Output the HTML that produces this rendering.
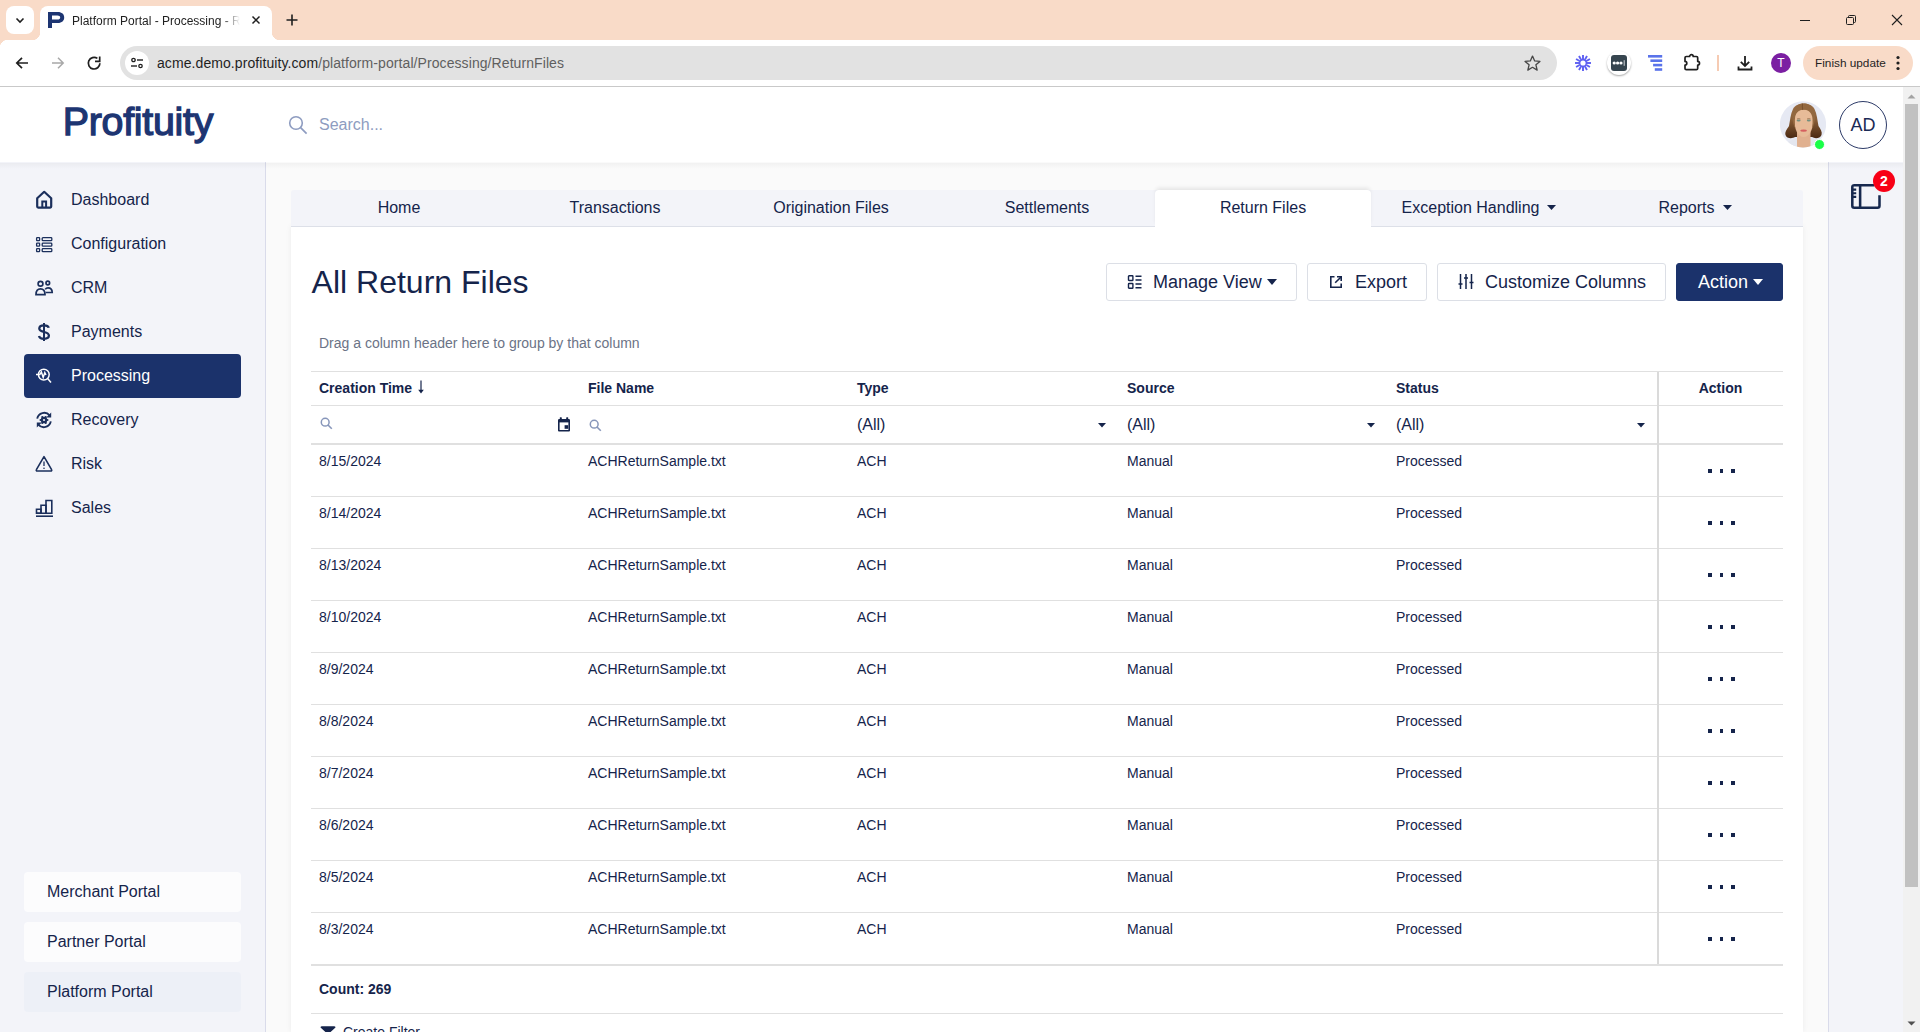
<!DOCTYPE html>
<html><head><meta charset="utf-8">
<style>
*{box-sizing:border-box;margin:0;padding:0}
html,body{width:1920px;height:1032px;overflow:hidden;background:#fff;font-family:"Liberation Sans",sans-serif;color:#1c2541}
.a{position:absolute}
svg{display:block}
/* chrome */
#tabstrip{left:0;top:0;width:1920px;height:40px;background:#f9dbc8}
#toolbar{left:0;top:40px;width:1920px;height:46px;background:#fff}
#tbline{left:0;top:86px;width:1920px;height:1px;background:#c9c9c9}
/* page */
#header{left:0;top:87px;width:1903px;height:76px;background:#fff}
#sidebar{left:0;top:162px;width:266px;height:870px;background:#f3f4f9;border-right:1px solid #d9dbea}
#main{left:266px;top:162px;width:1562px;height:870px;background:#fafafa}
#rpanel{left:1828px;top:162px;width:75px;height:870px;background:#f3f4f9;border-left:1px solid #d9dbea}
#scroll{left:1903px;top:87px;width:17px;height:945px;background:#f1f1f1}

.side{left:71px;margin-top:1px;font-size:16px;line-height:18px;color:#15244b;white-space:nowrap}
.portal{left:24px;width:217px;height:40px;border-radius:4px;background:#fcfcfd;padding-left:23px;font-size:16px;line-height:40px;color:#15244b}

.tab{top:199px;height:18px;text-align:center;font-size:16px;line-height:18px;color:#15244b;white-space:nowrap}
.btn{top:263px;height:38px;border:1px solid #dcdfe6;border-radius:3px;background:#fff}
.btxt{top:272px;font-size:18px;line-height:21px;color:#15244b;white-space:nowrap}

.hl{left:311px;width:1472px;height:1px;background:#e0e0e0}
.th{top:380px;font:bold 14px/16px 'Liberation Sans',sans-serif;color:#15244b;white-space:nowrap}
.flt{top:416px;font-size:16px;line-height:18px;color:#15244b}
.td{font-size:14px;line-height:16px;color:#15244b;white-space:nowrap}
.dots{left:1708px;width:27px;height:4px}
.dots i{position:absolute;top:0;width:3.5px;height:3.5px;background:#15244b}
</style></head><body>
<div id="tabstrip" class="a"></div>
<div id="toolbar" class="a"></div>
<div id="tbline" class="a"></div>
<!-- tab strip -->
<div class="a" style="left:6px;top:6px;width:28px;height:28px;border-radius:8px;background:#ffffff"></div>
<svg class="a" style="left:14px;top:14px" width="12" height="12" viewBox="0 0 12 12"><path d="M2.5 4.5 L6 8 L9.5 4.5" fill="none" stroke="#1f1f1f" stroke-width="1.6"/></svg>
<div class="a" style="left:40px;top:6px;width:232px;height:34px;background:#fff;border-radius:8px 8px 0 0"></div>
<div class="a" style="left:32px;top:32px;width:8px;height:8px;background:radial-gradient(circle at 0 0,#f9dbc8 8px,#fff 8.5px)"></div>
<div class="a" style="left:272px;top:32px;width:8px;height:8px;background:radial-gradient(circle at 100% 0,#f9dbc8 8px,#fff 8.5px)"></div>
<svg class="a" style="left:0;top:0" width="70" height="40" viewBox="0 0 70 40"><path fill-rule="evenodd" fill="#1d3572" d="M48 12.1 H57.8 C62 12.1 64.2 14.4 64.2 17.4 C64.2 20.5 62 22.9 57.8 22.9 H52 V27.9 H48 Z M52 15.4 V19.6 H57.4 C59.3 19.6 60.2 18.8 60.2 17.5 C60.2 16.2 59.3 15.4 57.4 15.4 Z"/></svg>
<div class="a" style="left:72px;top:14px;width:170px;overflow:hidden;white-space:nowrap;font-size:12px;line-height:14px;color:#1f1f1f;-webkit-mask-image:linear-gradient(90deg,#000 150px,transparent 168px)">Platform Portal - Processing - Return Files</div>
<svg class="a" style="left:250px;top:14px" width="12" height="12" viewBox="0 0 12 12"><path d="M2.5 2.5 L9.5 9.5 M9.5 2.5 L2.5 9.5" stroke="#1f1f1f" stroke-width="1.5"/></svg>
<svg class="a" style="left:285px;top:13px" width="14" height="14" viewBox="0 0 14 14"><path d="M7 1.5 V12.5 M1.5 7 H12.5" stroke="#1f1f1f" stroke-width="1.6"/></svg>
<svg class="a" style="left:1798px;top:14px" width="14" height="12" viewBox="0 0 14 12"><path d="M2 6.5 H12" stroke="#1f1f1f" stroke-width="1"/></svg>
<svg class="a" style="left:1844px;top:13px" width="14" height="14" viewBox="0 0 14 14"><rect x="2.5" y="4.5" width="7" height="7" rx="1" fill="none" stroke="#1f1f1f" stroke-width="1"/><path d="M4.5 4.5 V3.5 a1 1 0 0 1 1-1 H10.5 a1 1 0 0 1 1 1 V8.5 a1 1 0 0 1 -1 1 H9.5" fill="none" stroke="#1f1f1f" stroke-width="1"/></svg>
<svg class="a" style="left:1890px;top:13px" width="14" height="14" viewBox="0 0 14 14"><path d="M2 2 L12 12 M12 2 L2 12" stroke="#1f1f1f" stroke-width="1.1"/></svg>
<!-- toolbar -->
<div class="a" style="left:0;top:40px;width:8px;height:8px;background:radial-gradient(circle at 100% 100%,#fff 8px,#f9dbc8 8.5px)"></div>
<svg class="a" style="left:14px;top:55px" width="16" height="16" viewBox="0 0 16 16"><path d="M14 8 H3 M8 2.8 L2.8 8 L8 13.2" fill="none" stroke="#1f1f1f" stroke-width="1.7"/></svg>
<svg class="a" style="left:50px;top:55px" width="16" height="16" viewBox="0 0 16 16"><path d="M2 8 H13 M8 2.8 L13.2 8 L8 13.2" fill="none" stroke="#a8a8a8" stroke-width="1.5"/></svg>
<svg class="a" style="left:86px;top:55px" width="16" height="16" viewBox="0 0 16 16"><path d="M13.9 8.3 A5.8 5.8 0 1 1 11.4 3.4" fill="none" stroke="#1f1f1f" stroke-width="1.7"/><path d="M13.7 1.6 V6.3 H9" fill="none" stroke="#1f1f1f" stroke-width="1.7"/></svg>
<div class="a" style="left:120px;top:46px;width:1437px;height:34px;border-radius:17px;background:#e2e2e2"></div>
<div class="a" style="left:125px;top:51px;width:24px;height:24px;border-radius:12px;background:#fff"></div>
<svg class="a" style="left:129px;top:55px" width="16" height="16" viewBox="0 0 16 16"><circle cx="4.5" cy="5" r="1.7" fill="none" stroke="#1f1f1f" stroke-width="1.3"/><path d="M8 5 H14" stroke="#1f1f1f" stroke-width="1.4"/><circle cx="11.5" cy="11" r="1.7" fill="none" stroke="#1f1f1f" stroke-width="1.3"/><path d="M2 11 H8" stroke="#1f1f1f" stroke-width="1.4"/></svg>
<div class="a" style="left:157px;top:55px;font-size:14px;line-height:16px;letter-spacing:0.08px;white-space:nowrap;color:#1f1f1f" id="url">acme.demo.profituity.com<span style="color:#5f5f5f">/platform-portal/Processing/ReturnFiles</span></div>
<svg class="a" style="left:1523px;top:54px" width="19" height="19" viewBox="0 0 20 20"><path d="M10 2.2 L12.3 7.3 L17.8 7.8 L13.6 11.4 L14.9 16.9 L10 14 L5.1 16.9 L6.4 11.4 L2.2 7.8 L7.7 7.3 Z" fill="none" stroke="#474747" stroke-width="1.4" stroke-linejoin="round"/></svg>
<svg class="a" style="left:1574px;top:54px" width="18" height="18" viewBox="0 0 18 18"><g stroke="#5d5ff2" stroke-width="1.9"><path d="M9.00 12.90 L9.00 17.00"/><path d="M7.05 12.38 L5.00 15.93"/><path d="M5.62 10.95 L2.07 13.00"/><path d="M5.10 9.00 L1.00 9.00"/><path d="M5.62 7.05 L2.07 5.00"/><path d="M7.05 5.62 L5.00 2.07"/><path d="M9.00 5.10 L9.00 1.00"/><path d="M10.95 5.62 L13.00 2.07"/><path d="M12.38 7.05 L15.93 5.00"/><path d="M12.90 9.00 L17.00 9.00"/><path d="M12.38 10.95 L15.93 13.00"/><path d="M10.95 12.38 L13.00 15.93"/></g><circle cx="9" cy="9" r="3.4" fill="none" stroke="#5d5ff2" stroke-width="1.6"/></svg>
<div class="a" style="left:1607px;top:51px;width:24px;height:24px;border-radius:12px;background:#fff;box-shadow:0 1px 2px rgba(0,0,0,.35)"></div>
<div class="a" style="left:1611px;top:55px;width:16px;height:16px;border-radius:3px;background:#36454f"></div>
<svg class="a" style="left:1611px;top:55px" width="16" height="16" viewBox="0 0 16 16"><circle cx="3.2" cy="8" r="1.6" fill="#fff"/><circle cx="6.6" cy="8" r="1.6" fill="#fff"/><circle cx="10" cy="8" r="1.6" fill="#fff"/><path d="M13.2 5.2 V10.8" stroke="#d0d4d8" stroke-width="1"/></svg>
<svg class="a" style="left:1647px;top:55px" width="17" height="17" viewBox="0 0 17 17"><g fill="#5a73ea"><rect x="1" y="0" width="14.2" height="2.6"/><rect x="3.4" y="4.4" width="11.8" height="2.6"/><rect x="6.1" y="8.8" width="9.1" height="2.6"/><rect x="7.8" y="13.2" width="7.4" height="2.6"/></g></svg>
<svg class="a" style="left:1682px;top:53px" width="20" height="19" viewBox="0 0 20 19"><path d="M3 4.8 Q3 3.5 4.3 3.5 H7.6 A1.8 1.8 0 0 1 11.2 3.5 H14.4 Q15.7 3.5 15.7 4.8 V8.4 A1.8 1.8 0 0 1 15.7 12 V15.4 Q15.7 16.7 14.4 16.7 H4.3 Q3 16.7 3 15.4 V12 A1.8 1.8 0 0 0 3 8.4 Z" fill="none" stroke="#1f1f1f" stroke-width="1.7" stroke-linejoin="round"/></svg>
<div class="a" style="left:1717px;top:55px;width:2px;height:16px;background:#f6cbb3"></div>
<svg class="a" style="left:1736px;top:54px" width="18" height="18" viewBox="0 0 18 18"><path d="M9 2 V12 M4.8 7.8 L9 12 L13.2 7.8 M2.5 12.5 V15.5 H15.5 V12.5" fill="none" stroke="#1f1f1f" stroke-width="1.8"/></svg>
<div class="a" style="left:1771px;top:53px;width:20px;height:20px;border-radius:10px;background:#7b1fa2;color:#fff;font-size:12px;line-height:20px;text-align:center">T</div>
<div class="a" style="left:1803px;top:46px;width:110px;height:34px;border-radius:17px;background:#f9dbc8"></div>
<div class="a" style="left:1815px;top:55px;font-size:11.8px;line-height:16px;color:#1f1f1f;white-space:nowrap" id="fu">Finish update</div>
<svg class="a" style="left:1892px;top:54px" width="12" height="18" viewBox="0 0 12 18"><circle cx="6" cy="3.5" r="1.6" fill="#1f1f1f"/><circle cx="6" cy="9" r="1.6" fill="#1f1f1f"/><circle cx="6" cy="14.5" r="1.6" fill="#1f1f1f"/></svg>

<div id="header" class="a"></div>
<div id="sidebar" class="a"></div>
<div id="main" class="a"></div>
<div id="rpanel" class="a"></div>
<div id="scroll" class="a"></div>
<!-- page header -->
<div class="a" style="left:62.8px;top:95.9px;font:normal 39.4px/50px 'Liberation Sans',sans-serif;letter-spacing:-0.3px;color:#1d3572;-webkit-text-stroke:1.3px #1d3572" id="logo">Profituity</div>
<svg class="a" style="left:288px;top:115px" width="20" height="20" viewBox="0 0 20 20"><circle cx="8" cy="8" r="6.3" fill="none" stroke="#8e9cc0" stroke-width="1.6"/><path d="M12.6 12.6 L18.6 18.6" stroke="#8e9cc0" stroke-width="1.6"/></svg>
<div class="a" style="left:319px;top:116px;font-size:16px;line-height:18px;color:#8e9cc0" id="search">Search...</div>
<svg class="a" style="left:1780px;top:101px" width="46" height="47" viewBox="0 0 46 47">
 <defs><clipPath id="avc"><circle cx="23" cy="23.3" r="23.1"/></clipPath>
 <linearGradient id="hairg" x1="0" y1="0" x2="0" y2="1"><stop offset="0" stop-color="#a07650"/><stop offset=".45" stop-color="#8a5f38"/><stop offset="1" stop-color="#4a2912"/></linearGradient></defs>
 <g clip-path="url(#avc)">
  <rect width="46" height="47" fill="#e6e9f3"/>
  <path d="M13 8 C16 1 31.5 1 34.5 8 C37 13 37.5 20 38.5 25 C40.5 28 42.5 31 41.5 34 C40 37.5 35 38 32 36 L15 36 C12 38 6.5 37.5 5.5 34 C4.5 31 7 28 9 25 C10 20 10.5 13 13 8 Z" fill="url(#hairg)"/>
  <path d="M3 47 L8.5 40.5 L17 37 L30.5 37 L39 40.5 L44 47 Z" fill="#e4e6ee"/>
  <path d="M17 31 L17 47 L30.5 47 L30.5 31 Z" fill="#e0b08f"/>
  <path d="M14.2 19 C14.2 11.5 18 8.5 23.7 8.5 C29.4 8.5 33.3 11.5 33.3 19 C33.3 28 29.4 36 23.7 36 C18 36 14.2 28 14.2 19 Z" fill="#e7bb98"/>
  <path d="M23.7 2.2 C17 2.2 12.3 7 12.3 15 C12.5 20 13.5 24.5 15.5 28 C14.8 24 14.5 20 15.2 15.5 C16.5 11 19.5 8.6 23.7 8.8 Z" fill="#93683f"/>
  <path d="M23.7 2.2 C30.4 2.2 35.1 7 35.1 15 C34.9 20 33.9 24.5 31.9 28 C32.6 24 32.9 20 32.2 15.5 C30.9 11 27.9 8.6 23.7 8.8 Z" fill="#93683f"/>
  <path d="M22.6 2.6 Q22 6 22.8 9" stroke="#6e4726" stroke-width="1" fill="none" opacity=".7"/>
  <ellipse cx="18.6" cy="19.6" rx="2" ry="1" fill="#72907f"/>
  <ellipse cx="28.8" cy="19.6" rx="2" ry="1" fill="#72907f"/>
  <path d="M17 18 Q18.6 17.2 20.4 18 M27 18 Q28.8 17.2 30.6 18" stroke="#8a6040" stroke-width=".7" fill="none"/>
  <ellipse cx="23.6" cy="29.6" rx="3.3" ry="1.2" fill="#d55f5f"/>
 </g>
</svg>
<div class="a" style="left:1813.5px;top:138.5px;width:11px;height:11px;border-radius:50%;background:#1aff48;border:1.5px solid #fff"></div>
<div class="a" style="left:1839px;top:101px;width:48px;height:48px;border-radius:50%;border:1.5px solid #2d3b68;background:#fff"></div>
<div class="a" style="left:1839px;top:114px;width:48px;text-align:center;font-size:18px;line-height:22px;color:#1b2a55">AD</div>

<!-- sidebar -->
<div class="a" style="left:24px;top:354px;width:217px;height:44px;border-radius:4px;background:#1b326b"></div>
<div class="a side" style="top:190px">Dashboard</div>
<div class="a side" style="top:234px">Configuration</div>
<div class="a side" style="top:278px">CRM</div>
<div class="a side" style="top:322px">Payments</div>
<div class="a side" style="top:366px;color:#fff">Processing</div>
<div class="a side" style="top:410px">Recovery</div>
<div class="a side" style="top:454px">Risk</div>
<div class="a side" style="top:498px">Sales</div>
<svg class="a" style="left:35px;top:190px" width="19" height="19" viewBox="0 0 19 19"><path d="M2.2 8.2 L9.2 1.8 L16.2 8.2 V16.6 a1 1 0 0 1 -1 1 H3.2 a1 1 0 0 1 -1 -1 Z" fill="none" stroke="#1b2f5c" stroke-width="2.2" stroke-linejoin="round"/><path d="M7.3 17.5 V11.5 H11.1 V17.5" fill="none" stroke="#1b2f5c" stroke-width="2"/></svg>
<svg class="a" style="left:35px;top:237px" width="18" height="16" viewBox="0 0 18 16"><g fill="none" stroke="#1b2f5c" stroke-width="1.3"><rect x="1.6" y="0.7" width="3" height="3" rx=".6"/><rect x="1.6" y="6.2" width="3" height="3" rx=".6"/><rect x="1.6" y="11.7" width="3" height="3" rx=".6"/><rect x="7.2" y="0.7" width="9.6" height="3" rx=".8"/><rect x="7.2" y="6.2" width="9.6" height="3" rx=".8"/><rect x="7.2" y="11.7" width="9.6" height="3" rx=".8"/></g></svg>
<svg class="a" style="left:35px;top:280px" width="19" height="16" viewBox="0 0 19 16"><g fill="none" stroke="#1b2f5c" stroke-width="1.7"><circle cx="5.5" cy="3.8" r="2.4"/><circle cx="12.8" cy="3" r="1.8"/><path d="M1 14.6 C1 10.5 3 8.8 5.5 8.8 C8 8.8 10 10.5 10 14.6 Z"/><path d="M10.2 9.4 C11 8.2 12 7.8 13 7.8 C15.5 7.8 17.2 9 17.2 12.5 H10.8"/></g></svg>
<svg class="a" style="left:35px;top:322px" width="18" height="20" viewBox="0 0 18 20"><path d="M9 1 V19" stroke="#1b2f5c" stroke-width="2"/><path d="M13.8 5.8 C13.4 4.2 11.6 3.3 9 3.3 C6.2 3.3 4.3 4.6 4.3 6.6 C4.3 8.8 6.5 9.4 9 10 C11.6 10.6 13.9 11.3 13.9 13.6 C13.9 15.6 11.9 16.8 9 16.8 C6.2 16.8 4.4 15.8 4 14" fill="none" stroke="#1b2f5c" stroke-width="2.3"/></svg>
<svg class="a" style="left:35px;top:368px" width="18" height="17" viewBox="0 0 18 17"><g fill="none" stroke="#fff" stroke-width="1.5"><circle cx="8.8" cy="6.6" r="5.4"/><path d="M12.6 10.6 L16 14.4"/><path d="M1 6.6 H4.8 L6.4 4 L8.2 9.4 L9.8 4.6 L11 7"/></g></svg>
<svg class="a" style="left:35px;top:411px" width="18" height="18" viewBox="0 0 18 18"><g fill="none" stroke="#1b2f5c" stroke-width="1.9"><path d="M2.2 7.6 A7.1 7.1 0 0 1 14.6 4.4"/><path d="M15.8 10.4 A7.1 7.1 0 0 1 3.4 13.6"/></g><path d="M16.2 1.4 V6.4 H11.2 Z" fill="#1b2f5c"/><path d="M1.8 16.6 V11.6 H6.8 Z" fill="#1b2f5c"/><circle cx="9" cy="9" r="3.2" fill="#1b2f5c"/><circle cx="12.40" cy="9.00" r="1.1" fill="#1b2f5c"/><circle cx="10.70" cy="11.94" r="1.1" fill="#1b2f5c"/><circle cx="7.30" cy="11.94" r="1.1" fill="#1b2f5c"/><circle cx="5.60" cy="9.00" r="1.1" fill="#1b2f5c"/><circle cx="7.30" cy="6.06" r="1.1" fill="#1b2f5c"/><circle cx="10.70" cy="6.06" r="1.1" fill="#1b2f5c"/><circle cx="9" cy="9" r="1.1" fill="#f3f4f9"/></svg>
<svg class="a" style="left:35px;top:455px" width="18" height="17" viewBox="0 0 18 17"><path d="M9 1.6 L16.6 14.6 a.9 .9 0 0 1 -.8 1.4 H2.2 a.9 .9 0 0 1 -.8 -1.4 Z" fill="none" stroke="#1b2f5c" stroke-width="1.6" stroke-linejoin="round"/><path d="M9 6.5 V11" stroke="#1b2f5c" stroke-width="1.3"/><circle cx="9" cy="13.2" r=".8" fill="#1b2f5c"/></svg>
<svg class="a" style="left:35px;top:499px" width="19" height="19" viewBox="0 0 19 19"><g fill="none" stroke="#1b2f5c" stroke-width="1.6"><path d="M1 17.2 H18"/><path d="M1.5 14.3 V10.3 H6 V14.3 Z"/><path d="M6 14.3 V6.3 H11 V14.3"/><path d="M11 14.3 V1.5 H16.8 V14.3 H1.5"/></g></svg>
<div class="a portal" style="top:872px">Merchant Portal</div>
<div class="a portal" style="top:922px">Partner Portal</div>
<div class="a portal" style="top:972px;background:#edf0f7">Platform Portal</div>
<div class="a" style="left:291px;top:226px;width:1512px;height:806px;background:#fff;box-shadow:0 0 6px rgba(0,0,0,.06)"></div>
<div class="a" style="left:291px;top:190px;width:1512px;height:37px;background:#f3f4f9;border-bottom:1px solid #dde0e8;border-radius:3px 3px 0 0"></div>
<div class="a tab" style="left:291px;width:216px">Home</div>
<div class="a tab" style="left:507px;width:216px">Transactions</div>
<div class="a tab" style="left:723px;width:216px">Origination Files</div>
<div class="a tab" style="left:939px;width:216px">Settlements</div>
<div class="a" style="left:1155px;top:190px;width:216px;height:37px;background:#fff;border-radius:4px 4px 0 0;box-shadow:0 -3px 4px -1px rgba(0,0,0,.09)"></div>
<div class="a tab" style="left:1155px;width:216px">Return Files</div>
<div class="a tab" style="left:1371px;width:216px">Exception Handling<svg style="display:inline-block;vertical-align:middle;margin-left:8px;margin-top:-3px" width="9" height="5" viewBox="0 0 9 5"><path d="M0 0 H9 L4.5 5 Z" fill="#15244b"/></svg></div>
<div class="a tab" style="left:1587px;width:216px">Reports<svg style="display:inline-block;vertical-align:middle;margin-left:8px;margin-top:-3px" width="9" height="5" viewBox="0 0 9 5"><path d="M0 0 H9 L4.5 5 Z" fill="#15244b"/></svg></div>
<div class="a" style="left:311.6px;top:263px;font-size:32px;line-height:38px;color:#15244b;white-space:nowrap" id="title">All Return Files</div>
<div class="a btn" style="left:1106px;width:191px"></div>
<div class="a btn" style="left:1307px;width:120px"></div>
<div class="a btn" style="left:1437px;width:229px"></div>
<div class="a btn" style="left:1676px;width:107px;background:#1b326b;border-color:#1b326b"></div>
<svg class="a" style="left:1127px;top:274px" width="16" height="16" viewBox="0 0 16 16"><g fill="none" stroke="#15244b" stroke-width="1.4"><rect x="1.5" y="1.7" width="4.4" height="4.8" rx=".6"/><rect x="1.5" y="9.5" width="4.4" height="4.8" rx=".6"/><path d="M8.5 2.3 H14.5 M8.5 6 H14.5 M8.5 10 H14.5 M8.5 13.7 H14.5"/></g></svg>
<div class="a btxt" style="left:1153px">Manage View<svg style="display:inline-block;vertical-align:middle;margin-left:5px;margin-top:-3px" width="10" height="6" viewBox="0 0 10 6"><path d="M0 0 H10 L5 6 Z" fill="#15244b"/></svg></div>
<svg class="a" style="left:1329px;top:275px" width="14" height="14" viewBox="0 0 14 14"><g fill="none" stroke="#15244b" stroke-width="1.6"><path d="M5.5 1.8 H1.8 V12.2 H12.2 V8.5"/><path d="M8 1.8 H12.2 V6"/><path d="M12 2 L6.2 7.8"/></g></svg>
<div class="a btxt" style="left:1355px">Export</div>
<svg class="a" style="left:1458px;top:273px" width="16" height="17" viewBox="0 0 16 17"><g fill="none" stroke="#15244b" stroke-width="1.5"><path d="M2.5 1 V16 M8 1 V16 M13.5 1 V16"/><path d="M0.5 11 H4.5 M6 5 H10 M11.5 9.5 H15.5"/></g></svg>
<div class="a btxt" style="left:1485px">Customize Columns</div>
<div class="a btxt" style="left:1698px;color:#fff">Action<svg style="display:inline-block;vertical-align:middle;margin-left:5px;margin-top:-3px" width="10" height="6" viewBox="0 0 10 6"><path d="M0 0 H10 L5 6 Z" fill="#fff"/></svg></div>
<div class="a" style="left:319px;top:335px;font-size:14px;line-height:16px;color:#6b7386;white-space:nowrap">Drag a column header here to group by that column</div>

<div class="a hl" style="top:371px"></div>
<div class="a hl" style="top:405px"></div>
<div class="a hl" style="top:443px;height:2px"></div>
<div class="a hl" style="top:496px"></div>
<div class="a hl" style="top:548px"></div>
<div class="a hl" style="top:600px"></div>
<div class="a hl" style="top:652px"></div>
<div class="a hl" style="top:704px"></div>
<div class="a hl" style="top:756px"></div>
<div class="a hl" style="top:808px"></div>
<div class="a hl" style="top:860px"></div>
<div class="a hl" style="top:912px"></div>
<div class="a hl" style="top:964px;height:2px"></div>
<div class="a hl" style="top:1013px"></div>
<div class="a" style="left:1657px;top:372px;width:2px;height:592px;background:#dadada"></div>
<div class="a th" style="left:319px">Creation Time</div>
<div class="a th" style="left:588px">File Name</div>
<div class="a th" style="left:857px">Type</div>
<div class="a th" style="left:1127px">Source</div>
<div class="a th" style="left:1396px">Status</div>
<div class="a th" style="left:1659px;width:123px;text-align:center">Action</div>
<svg class="a" style="left:417px;top:380px" width="8" height="14" viewBox="0 0 8 14"><path d="M4 0.5 V11" stroke="#15244b" stroke-width="1.2"/><path d="M1.2 9.8 H6.8 L4 13.6 Z" fill="#15244b"/></svg>
<svg class="a" style="left:320px;top:417px" width="13" height="13" viewBox="0 0 13 13"><circle cx="5.2" cy="5.2" r="3.9" fill="none" stroke="#8796ba" stroke-width="1.5"/><path d="M8 8 L11.8 11.8" stroke="#8796ba" stroke-width="1.6"/></svg>
<svg class="a" style="left:589px;top:419px" width="13" height="13" viewBox="0 0 13 13"><circle cx="5.2" cy="5.2" r="3.9" fill="none" stroke="#8796ba" stroke-width="1.5"/><path d="M8 8 L11.8 11.8" stroke="#8796ba" stroke-width="1.6"/></svg>
<svg class="a" style="left:557px;top:417px" width="14" height="15" viewBox="0 0 14 15"><path d="M1 3.2 a1.2 1.2 0 0 1 1.2 -1.2 H11.8 a1.2 1.2 0 0 1 1.2 1.2 V13.6 a1 1 0 0 1 -1 1 H2 a1 1 0 0 1 -1 -1 Z" fill="#15244b"/><rect x="2.6" y="5.4" width="8.8" height="7.6" fill="#fff"/><rect x="7.6" y="8.2" width="3.6" height="3.6" fill="#15244b"/><rect x="2.8" y="0.2" width="2" height="2.5" rx=".6" fill="#15244b"/><rect x="9.2" y="0.2" width="2" height="2.5" rx=".6" fill="#15244b"/></svg>
<div class="a flt" style="left:857px">(All)</div>
<svg class="a" style="left:1098px;top:423px" width="8" height="5" viewBox="0 0 8 5"><path d="M0 0 H8 L4 4.5 Z" fill="#15244b"/></svg>
<div class="a flt" style="left:1127px">(All)</div>
<svg class="a" style="left:1367px;top:423px" width="8" height="5" viewBox="0 0 8 5"><path d="M0 0 H8 L4 4.5 Z" fill="#15244b"/></svg>
<div class="a flt" style="left:1396px">(All)</div>
<svg class="a" style="left:1637px;top:423px" width="8" height="5" viewBox="0 0 8 5"><path d="M0 0 H8 L4 4.5 Z" fill="#15244b"/></svg>
<div class="a td" style="left:319px;top:453px">8/15/2024</div>
<div class="a td" style="left:588px;top:453px">ACHReturnSample.txt</div>
<div class="a td" style="left:857px;top:453px">ACH</div>
<div class="a td" style="left:1127px;top:453px">Manual</div>
<div class="a td" style="left:1396px;top:453px">Processed</div>
<div class="a dots" style="top:469px"><i style="left:0"></i><i style="left:11.5px"></i><i style="left:23px"></i></div>
<div class="a td" style="left:319px;top:505px">8/14/2024</div>
<div class="a td" style="left:588px;top:505px">ACHReturnSample.txt</div>
<div class="a td" style="left:857px;top:505px">ACH</div>
<div class="a td" style="left:1127px;top:505px">Manual</div>
<div class="a td" style="left:1396px;top:505px">Processed</div>
<div class="a dots" style="top:521px"><i style="left:0"></i><i style="left:11.5px"></i><i style="left:23px"></i></div>
<div class="a td" style="left:319px;top:557px">8/13/2024</div>
<div class="a td" style="left:588px;top:557px">ACHReturnSample.txt</div>
<div class="a td" style="left:857px;top:557px">ACH</div>
<div class="a td" style="left:1127px;top:557px">Manual</div>
<div class="a td" style="left:1396px;top:557px">Processed</div>
<div class="a dots" style="top:573px"><i style="left:0"></i><i style="left:11.5px"></i><i style="left:23px"></i></div>
<div class="a td" style="left:319px;top:609px">8/10/2024</div>
<div class="a td" style="left:588px;top:609px">ACHReturnSample.txt</div>
<div class="a td" style="left:857px;top:609px">ACH</div>
<div class="a td" style="left:1127px;top:609px">Manual</div>
<div class="a td" style="left:1396px;top:609px">Processed</div>
<div class="a dots" style="top:625px"><i style="left:0"></i><i style="left:11.5px"></i><i style="left:23px"></i></div>
<div class="a td" style="left:319px;top:661px">8/9/2024</div>
<div class="a td" style="left:588px;top:661px">ACHReturnSample.txt</div>
<div class="a td" style="left:857px;top:661px">ACH</div>
<div class="a td" style="left:1127px;top:661px">Manual</div>
<div class="a td" style="left:1396px;top:661px">Processed</div>
<div class="a dots" style="top:677px"><i style="left:0"></i><i style="left:11.5px"></i><i style="left:23px"></i></div>
<div class="a td" style="left:319px;top:713px">8/8/2024</div>
<div class="a td" style="left:588px;top:713px">ACHReturnSample.txt</div>
<div class="a td" style="left:857px;top:713px">ACH</div>
<div class="a td" style="left:1127px;top:713px">Manual</div>
<div class="a td" style="left:1396px;top:713px">Processed</div>
<div class="a dots" style="top:729px"><i style="left:0"></i><i style="left:11.5px"></i><i style="left:23px"></i></div>
<div class="a td" style="left:319px;top:765px">8/7/2024</div>
<div class="a td" style="left:588px;top:765px">ACHReturnSample.txt</div>
<div class="a td" style="left:857px;top:765px">ACH</div>
<div class="a td" style="left:1127px;top:765px">Manual</div>
<div class="a td" style="left:1396px;top:765px">Processed</div>
<div class="a dots" style="top:781px"><i style="left:0"></i><i style="left:11.5px"></i><i style="left:23px"></i></div>
<div class="a td" style="left:319px;top:817px">8/6/2024</div>
<div class="a td" style="left:588px;top:817px">ACHReturnSample.txt</div>
<div class="a td" style="left:857px;top:817px">ACH</div>
<div class="a td" style="left:1127px;top:817px">Manual</div>
<div class="a td" style="left:1396px;top:817px">Processed</div>
<div class="a dots" style="top:833px"><i style="left:0"></i><i style="left:11.5px"></i><i style="left:23px"></i></div>
<div class="a td" style="left:319px;top:869px">8/5/2024</div>
<div class="a td" style="left:588px;top:869px">ACHReturnSample.txt</div>
<div class="a td" style="left:857px;top:869px">ACH</div>
<div class="a td" style="left:1127px;top:869px">Manual</div>
<div class="a td" style="left:1396px;top:869px">Processed</div>
<div class="a dots" style="top:885px"><i style="left:0"></i><i style="left:11.5px"></i><i style="left:23px"></i></div>
<div class="a td" style="left:319px;top:921px">8/3/2024</div>
<div class="a td" style="left:588px;top:921px">ACHReturnSample.txt</div>
<div class="a td" style="left:857px;top:921px">ACH</div>
<div class="a td" style="left:1127px;top:921px">Manual</div>
<div class="a td" style="left:1396px;top:921px">Processed</div>
<div class="a dots" style="top:937px"><i style="left:0"></i><i style="left:11.5px"></i><i style="left:23px"></i></div>
<div class="a" style="left:319px;top:981px;font:bold 14px/16px 'Liberation Sans',sans-serif;color:#15244b">Count: 269</div>
<svg class="a" style="left:320px;top:1026px" width="16" height="10" viewBox="0 0 16 10"><path d="M0.5 1.5 Q0.5 0.3 2 0.3 H14 Q15.5 0.3 15.5 1.5 L9.5 7 V10 H6.5 V7 Z" fill="#15244b"/></svg>
<div class="a" style="left:343px;top:1024px;font-size:14px;line-height:16px;color:#15244b">Create Filter</div>
<!-- right panel -->
<svg class="a" style="left:1850px;top:182.5px" width="32" height="27" viewBox="0 0 32 27.6"><path d="M24.5 2.2 H4 a2 2 0 0 0 -2 2 V23.2 a2 2 0 0 0 2 2 H27.8 a2 2 0 0 0 2 -2 V12.5" fill="none" stroke="#17294f" stroke-width="2.6"/><path d="M10 2.5 V25" stroke="#17294f" stroke-width="2.6"/><path d="M2 6.8 H6 M2 10.5 H6 M2 14.2 H6" stroke="#17294f" stroke-width="2.2"/></svg>
<div class="a" style="left:1873px;top:170px;width:22px;height:22px;border-radius:50%;background:#f80016;color:#fff;font:bold 14px/22px 'Liberation Sans',sans-serif;text-align:center">2</div>
<!-- scrollbar -->
<div class="a" style="left:1905px;top:104px;width:13px;height:783px;background:#c1c1c1"></div>
<svg class="a" style="left:1905px;top:92px" width="13" height="8" viewBox="0 0 13 8"><path d="M2.5 6.5 L6.5 2.5 L10.5 6.5 Z" fill="#a3a3a3"/></svg>
<svg class="a" style="left:1905px;top:1020px" width="13" height="8" viewBox="0 0 13 8"><path d="M2.5 1.5 L6.5 5.5 L10.5 1.5 Z" fill="#505050"/></svg>
<div class="a" style="left:0;top:163px;width:1903px;height:6px;background:linear-gradient(rgba(0,0,0,.035),rgba(0,0,0,0))"></div>

</body></html>
